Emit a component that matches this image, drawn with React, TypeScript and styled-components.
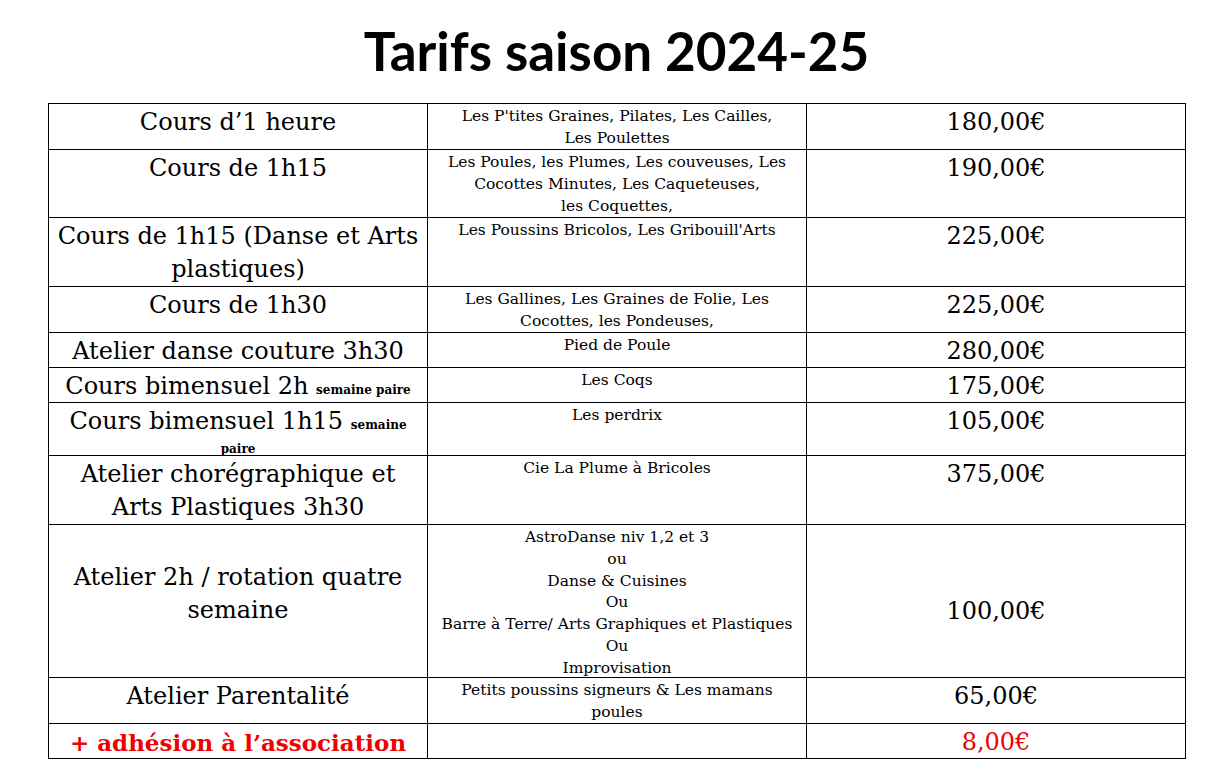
import React from 'react';
import styled, { createGlobalStyle } from 'styled-components';

const Global = createGlobalStyle`
  html, body { margin: 0; padding: 0; background: #ffffff; }
  body { font-family: "DejaVu Serif", "Liberation Serif", serif; color: #000; }
`;

const Page = styled.div`
  width: 1213px;
  min-height: 774px;
  display: flex;
  flex-direction: column;
`;

const Title = styled.h1`
  margin: 0;
  padding: 21px 0 0 20px;
  font-family: Lato, "Open Sans", sans-serif;
  font-weight: 700;
  font-size: 53px;
  line-height: 60px;
  text-align: center;
  color: #000;
`;

const Grid = styled.div<{ $rows: string }>`
  margin: 22px 0 0 48px;
  width: 1138px;
  display: grid;
  grid-template-columns: 379px 379px 379px;
  grid-template-rows: ${(p) => p.$rows};
  border-top: 1px solid #000;
  border-left: 1px solid #000;
  box-sizing: border-box;
`;

type Kind = 'label' | 'groups' | 'price';

const Cell = styled.div<{ $kind: Kind; $middle?: boolean; $accent?: boolean; $pad?: number; $padBottom?: number }>`
  box-sizing: border-box;
  border-right: 1px solid #000;
  border-bottom: 1px solid #000;
  display: flex;
  flex-direction: column;
  align-items: center;
  justify-content: ${(p) => (p.$middle ? 'center' : 'flex-start')};
  padding-top: ${(p) => p.$pad ?? 2}px;
  padding-bottom: ${(p) => p.$padBottom ?? 0}px;
  text-align: center;
  white-space: nowrap;
  color: ${(p) => (p.$accent ? '#f00000' : '#000')};
  font-size: ${(p) => (p.$kind === 'groups' ? '15.5px' : p.$accent && p.$kind === 'label' ? '23px' : '24px')};
  line-height: ${(p) => (p.$kind === 'groups' ? '21.8px' : '33px')};
  font-weight: ${(p) => (p.$accent && p.$kind === 'label' ? 700 : 400)};
`;

const Line = styled.span`
  display: block;
`;

const Note = styled.span`
  font-size: 12px;
  font-weight: 700;
`;

const NoteLine = styled.span`
  display: block;
  font-size: 12px;
  font-weight: 700;
  line-height: 14px;
`;

type Row = {
  h: number;
  label: React.ReactNode[];
  groups: string[];
  price: string;
  middle?: boolean;
  pricePad?: number;
  accent?: boolean;
};

const rows: Row[] = [
  { h: 46, label: ['Cours d’1 heure'], groups: ["Les P'tites Graines, Pilates, Les Cailles,", 'Les Poulettes'], price: '180,00€' },
  {
    h: 68,
    label: ['Cours de 1h15'],
    groups: ['Les Poules, les Plumes, Les couveuses, Les', 'Cocottes Minutes, Les Caqueteuses,', 'les Coquettes,'],
    price: '190,00€',
  },
  { h: 69, label: ['Cours de 1h15 (Danse et Arts', 'plastiques)'], groups: ["Les Poussins Bricolos, Les Gribouill'Arts"], price: '225,00€' },
  { h: 46, label: ['Cours de 1h30'], groups: ['Les Gallines, Les Graines de Folie, Les', 'Cocottes, les Pondeuses,'], price: '225,00€' },
  { h: 35, label: ['Atelier danse couture 3h30'], groups: ['Pied de Poule'], price: '280,00€' },
  {
    h: 35,
    label: [
      <>
        Cours bimensuel 2h <Note>semaine paire</Note>
      </>,
    ],
    groups: ['Les Coqs'],
    price: '175,00€',
  },
  {
    h: 53,
    label: [
      <>
        Cours bimensuel 1h15 <Note>semaine</Note>
      </>,
      <NoteLine>paire</NoteLine>,
    ],
    groups: ['Les perdrix'],
    price: '105,00€',
  },
  { h: 69, label: ['Atelier chorégraphique et', 'Arts Plastiques 3h30'], groups: ['Cie La Plume à Bricoles'], price: '375,00€' },
  {
    h: 153,
    label: ['Atelier 2h / rotation quatre', 'semaine'],
    groups: [
      'AstroDanse niv 1,2 et 3',
      'ou',
      'Danse & Cuisines',
      'Ou',
      'Barre à Terre/ Arts Graphiques et Plastiques',
      'Ou',
      'Improvisation',
    ],
    price: '100,00€',
    middle: true,
    pricePad: 20,
  },
  { h: 46, label: ['Atelier Parentalité'], groups: ['Petits poussins signeurs & Les mamans', 'poules'], price: '65,00€' },
  { h: 35, label: ['+ adhésion à l’association'], groups: [], price: '8,00€', accent: true },
];

export default function App() {
  return (
    <>
      <Global />
      <Page>
        <Title>Tarifs saison 2024-25</Title>
        <Grid $rows={rows.map((r) => `${r.h}px`).join(' ')}>
          {rows.map((r, i) => (
            <React.Fragment key={i}>
              <Cell
                $kind="label"
                $middle={r.middle}
                $accent={r.accent}
                $pad={r.middle ? 0 : 2}
                $padBottom={r.middle ? 14 : 0}
              >
                {r.label.map((l, j) => (
                  <Line key={j}>{l}</Line>
                ))}
              </Cell>
              <Cell $kind="groups">
                {r.groups.map((g, j) => (
                  <Line key={j}>{g}</Line>
                ))}
              </Cell>
              <Cell $kind="price" $middle={r.middle} $accent={r.accent} $pad={r.pricePad}>
                <Line>{r.price}</Line>
              </Cell>
            </React.Fragment>
          ))}
        </Grid>
      </Page>
    </>
  );
}
